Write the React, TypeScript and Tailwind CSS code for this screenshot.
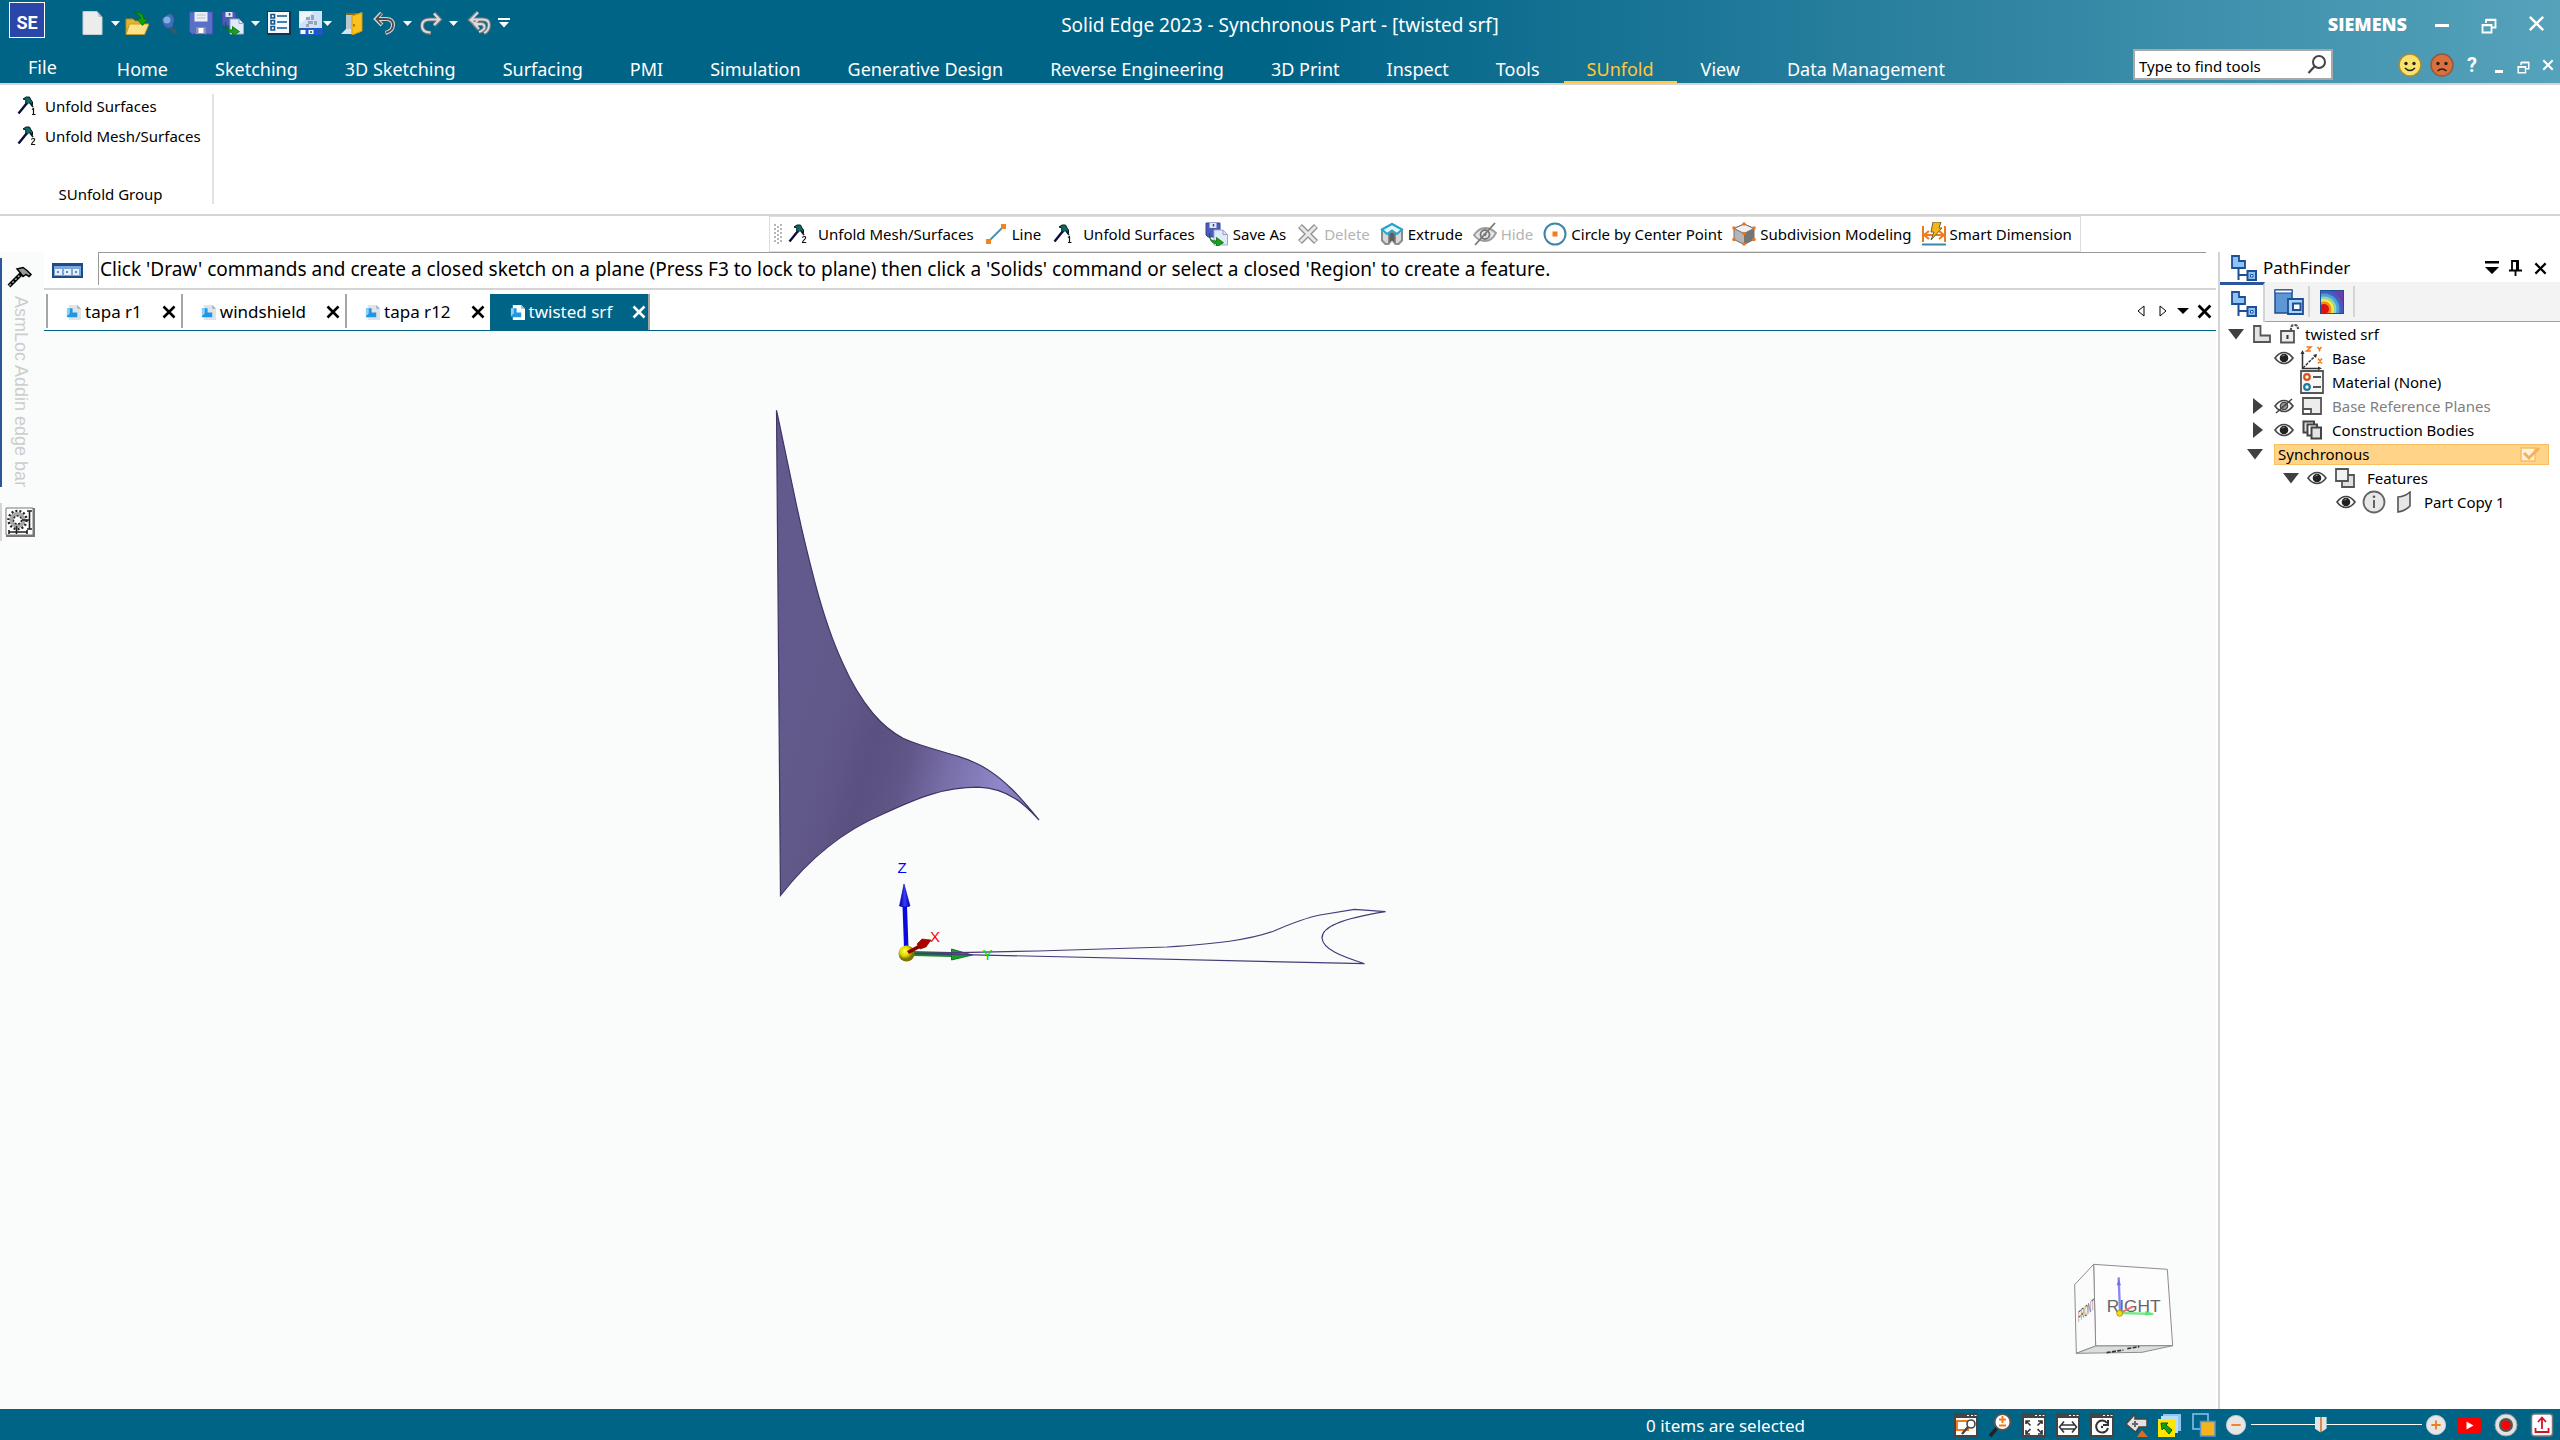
import type { ReactNode } from "react"

const menuTabs = [
  "Home",
  "Sketching",
  "3D Sketching",
  "Surfacing",
  "PMI",
  "Simulation",
  "Generative Design",
  "Reverse Engineering",
  "3D Print",
  "Inspect",
  "Tools",
  "SUnfold",
  "View",
  "Data Management",
]

const documents = [
  { name: "tapa r1", active: false },
  { name: "windshield", active: false },
  { name: "tapa r12", active: false },
  { name: "twisted srf", active: true },
]

type IconProps = { size?: number; box?: string; children: ReactNode }

function Icon({ size = 24, box = "0 0 24 24", children }: IconProps) {
  return (
    <svg width={size} height={size} viewBox={box} fill="none" className="shrink-0" aria-hidden="true">
      {children}
    </svg>
  )
}

/* ---------- shared icons ---------- */

function HammerIcon({ mark }: { mark: "1" | "2" }) {
  return (
    <Icon size={20} box="0 0 20 20">
      <path d="M1.500 17.500 10 7" stroke="#0b0b3c" strokeWidth="2.400" />
      <path d="M6 3 9 1h3.500l1.500 3 1.500 2v3l-2-1.500L12 6.500 10.500 8 8.500 6.500 9 4z" fill="#0c6b66" stroke="#0a1a1c" strokeWidth="1" />
      <path d="m13 7 3 4" stroke="#0a1a1c" strokeWidth="1.600" />
      {mark === "1" ? (
        <path d="M15 13.500 16.500 12.500v6M15 18.500h3.500" stroke="#111" strokeWidth="1.200" />
      ) : (
        <path d="M14.500 13.700q0-1.200 1.600-1.200t1.500 1.200q0 .8-1.500 2.200T14.500 18.500h3.700" stroke="#111" strokeWidth="1.100" />
      )}
    </Icon>
  )
}

function DiskPages() {
  return (
    <Icon>
      <path d="M1 1h14v14H3l-2-2z" fill="#4a5cb4" stroke="#3548a0" />
      <path d="M4.500 1h7v5h-7z" fill="#dfe6f6" />
      <path d="M8.500 2v2.500" stroke="#33418f" strokeWidth="1.500" />
      <path d="M9 8h9l4.500 4.500V23H9z" fill="#e3eaf7" stroke="#9aa9cf" />
      <path d="M18 8v4.500h4.500" stroke="#8fa0cc" />
      <path d="M4.500 11v3q0 5 7 5v-3.500l7 5.200-7 4v-3Q4 21.500 4.500 11z" fill="#17a317" stroke="#086b08" strokeWidth=".8" />
    </Icon>
  )
}

function CloseX({ size = 14, width = 2.6 }: { size?: number; width?: number }) {
  return (
    <Icon size={size} box="0 0 14 14">
      <path d="m1.500 1.500 11 11m0-11-11 11" stroke="currentColor" strokeWidth={width} />
    </Icon>
  )
}

function RestoreIcon({ size = 16 }: { size?: number }) {
  return (
    <Icon size={size} box="0 0 16 16">
      <path d="M5 5V2h9.500v7.500H11" stroke="#fff" strokeWidth="1.800" />
      <path d="M5 1.800h10M1 7.200h10" stroke="#fff" strokeWidth="2.200" />
      <path d="M1.500 7h9v7.500h-9z" stroke="#fff" strokeWidth="1.800" />
    </Icon>
  )
}

function EyeIcon({ crossed = false }: { crossed?: boolean }) {
  return (
    <Icon size={20} box="0 0 20 16">
      <path d="M1 8q4-5.500 9-5.500T19 8q-4 5.500-9 5.500T1 8z" fill="#fff" stroke="#444" strokeWidth="1.600" />
      {crossed ? (
        <>
          <circle cx="10" cy="8" r="3.600" fill="#999" stroke="#444" strokeWidth="1.400" />
          <path d="M2 15 18 1" stroke="#444" strokeWidth="1.600" />
        </>
      ) : (
        <>
          <circle cx="10" cy="8" r="4.300" fill="#222" />
          <path d="M8 6.500q.8-1.500 2.500-1.300" stroke="#999" />
        </>
      )}
    </Icon>
  )
}

/* ---------- title bar ---------- */

function DropArrow({ className = "w-5" }: { className?: string }) {
  return (
    <button aria-label="More" className={`flex h-6 items-center justify-center ${className}`}>
      <svg width="9" height="5" viewBox="0 0 9 5" aria-hidden="true">
        <path d="M0 0h9L4.500 5z" fill="#fff" />
      </svg>
    </button>
  )
}

function ToolButton({ label, className = "", children }: { label: string; className?: string; children: ReactNode }) {
  return (
    <button aria-label={label} className={`flex h-6 w-6 items-center justify-center ${className}`}>
      {children}
    </button>
  )
}

function QuickAccess() {
  return (
    <div className="flex items-center pt-[9px]">
      <ToolButton label="New">
        <Icon>
          <path d="M2 .5h14L21 6v17.500H2z" fill="#ececec" stroke="#c9cdd0" />
          <path d="M16 .5 21 6h-3z" fill="#b8bcc2" />
        </Icon>
      </ToolButton>
      <DropArrow />
      <ToolButton label="Open">
        <Icon>
          <path d="M1 8h7l2 2h9v13H1z" fill="#e2b531" stroke="#b48a18" />
          <path d="M4.500 13H24l-4.500 10.500H1z" fill="#fbe38a" stroke="#c69a26" />
          <path d="M9 1q10 0 10 7h4l-5.500 6.500L12 8h3.500Q15.500 4 9 1z" fill="#10a010" stroke="#076807" strokeWidth=".8" />
        </Icon>
      </ToolButton>
      <ToolButton label="Pin" className="ml-2">
        <Icon>
          <path d="m13 14 7 6q2 2-1 2.500-4 0-7-5z" fill="#3b5866" />
          <path d="M5 11q-1.500-4 2-5l4-3q3-1 5 1l1.500 4-1 6q-1 3.500-5 3.500t-6.500-6.500z" fill="#3a70b4" stroke="#24508c" />
          <circle cx="10" cy="9" r="3.500" fill="#7fb0e2" />
        </Icon>
      </ToolButton>
      <ToolButton label="Save" className="ml-2">
        <Icon>
          <path d="M.5 1h23v22H3L.5 20.500z" fill="#5a70c8" stroke="#4054ae" />
          <path d="M5.500 1h13v9.500h-13z" fill="#e9edf6" />
          <path d="M8 4h8.500M8 7h8.500" stroke="#b9bfd0" />
          <path d="M7 16h10v7H7z" fill="#8d93a4" />
          <path d="M9.500 17h5v5h-5z" fill="#fff" />
        </Icon>
      </ToolButton>
      <ToolButton label="Save copy" className="ml-2">
        <DiskPages />
      </ToolButton>
      <DropArrow />
      <ToolButton label="Options list" className="ml-0.5">
        <Icon>
          <path d="M0 0h24v24H0z" fill="#0f3556" />
          <path d="M1 1h21v21H1z" fill="#f3f8fc" />
          <path d="M4 3.500h3.500V7H4zM4 9.500h3.500V13H4zM4 15.500h3.500V19H4z" stroke="#15568a" strokeWidth="1.600" />
          <path d="M10 5h10M10 11h10M10 17h10" stroke="#15568a" strokeWidth="1.600" />
        </Icon>
      </ToolButton>
      <ToolButton label="Capture" className="ml-2">
        <Icon>
          <path d="M0 0h23v17H0z" fill="#cfe2fa" />
          <path d="M1 1h13l-7 7-6 5z" fill="#eef5fd" />
          <path d="M7 6h4v3H7zM12 4h3v5h-3zM9 10h5v3H9zM15 10h3v4h-3zM7 13h3v3H7z" fill="#97a4b8" />
          <path d="M0 17h24v7H0z" fill="#1b58c8" />
          <path d="M1.500 19h5v4h-5zM9.500 19h5v4h-5z" fill="#fff" />
          <path d="M11 20h2v2h-2z" fill="#2a9b2a" />
        </Icon>
      </ToolButton>
      <DropArrow className="w-4 -ml-1.5 pl-1" />
      <ToolButton label="Exit" className="ml-2">
        <Icon>
          <path d="M5 3h8v18H5z" fill="#b9c7d0" />
          <path d="M0 23 5 18h9v5z" fill="#d9e2ea" />
          <path d="M5 2h14v20h-3V4H5z" fill="#8b6b12" />
          <path d="M11 5 21 1.500V20l-10 4z" fill="#fbc21c" stroke="#d39b0b" />
          <path d="M13 13v2.500" stroke="#8a6408" strokeWidth="1.500" />
        </Icon>
      </ToolButton>
      <ToolButton label="Undo" className="ml-2">
        <Icon>
          <path d="M8.500 2 3 8l6 6M3.500 8H13q7 0 7 6t-7.500 8" stroke="#d5d5d5" strokeWidth="4" />
          <path d="M8.500 2.500 3.500 8l5 5.500M4 8h9q7 0 7 6t-7 7.500" stroke="#4b4b4b" strokeWidth="1.800" />
        </Icon>
      </ToolButton>
      <DropArrow />
      <ToolButton label="Redo" className="ml-0.5">
        <Icon>
          <path d="m15 2 6 6.500-6 6M20.500 8.500H11q-8 0-8 6.500t9 7" stroke="#6d7478" strokeWidth="4" />
          <path d="m15 2.500 5.500 6-5.500 5.500M20 8.500H11q-8 0-8 6.500t8.500 6.500" stroke="#dcdcdc" strokeWidth="2.200" />
        </Icon>
      </ToolButton>
      <DropArrow />
      <ToolButton label="Repeat" className="ml-1">
        <Icon>
          <path d="M11 1 3 9l8 7M4 8.500h12q6 0 6 5.500t-5 8.500M12 7.500 7 13l5 5.500M8 13h6q3.500 0 3.500 3T12 21" stroke="#7a7f83" strokeWidth="3.800" />
          <path d="M11 1.500 3.500 9l7.500 6.500M4 8.500h12q6 0 6 5.500t-5 8M12 8l-4.500 5 4.500 5M8 13h6q3.500 0 3.500 3T12 21" stroke="#dcdcdc" strokeWidth="1.800" />
        </Icon>
      </ToolButton>
      <button aria-label="Customize" className="ml-[7px] flex h-6 items-center">
        <svg width="12" height="10" viewBox="0 0 12 10" aria-hidden="true">
          <path d="M0 0h12v2H0zM1 4h10L6 9.500z" fill="#fff" />
        </svg>
      </button>
    </div>
  )
}

function TitleBar() {
  return (
    <div className="grid h-[47px] grid-cols-[1fr_auto_1fr] items-center">
      <div className="flex items-start gap-9 self-start pt-0.5 pl-[9px]">
        <div className="flex h-9 w-9 items-center justify-center border border-white bg-[#2a46a8] pt-1.5 font-['Roboto',sans-serif] text-lg leading-none font-bold text-white">
          SE
        </div>
        <QuickAccess />
      </div>
      <h1 className="pt-0.5 text-[19px] leading-6 text-white">Solid Edge 2023 - Synchronous Part - [twisted srf]</h1>
      <div className="flex items-center justify-end gap-[31px] pr-[15px]">
        <span className="font-['Open_Sans',sans-serif] text-[18px] leading-6 font-extrabold text-white">SIEMENS</span>
        <div className="flex items-center gap-[31px]">
          <button aria-label="Minimize" className="-ml-1 flex h-6 w-4 items-center justify-center">
            <span className="mt-1 h-[3px] w-[14px] bg-white" />
          </button>
          <button aria-label="Restore" className="pt-1">
            <RestoreIcon />
          </button>
          <button aria-label="Close" className="text-white">
            <CloseX size={17} width={2} />
          </button>
        </div>
      </div>
    </div>
  )
}

function FaceIcon({ fill, edge, mouth }: { fill: string; edge: string; mouth: string }) {
  return (
    <Icon>
      <circle cx="12" cy="12" r="11" fill={fill} stroke={edge} strokeWidth="1.500" />
      <circle cx="8" cy="10.500" r="1.700" fill="#222" />
      <circle cx="16" cy="10.500" r="1.700" fill="#222" />
      <path d={mouth} stroke="#222" strokeWidth="1.600" />
    </Icon>
  )
}

function MenuBar() {
  return (
    <div className="flex h-9 items-stretch justify-between text-[18px] text-white">
      <nav className="flex items-end">
        <button className="mr-[37px] h-8 pl-7 leading-6">File</button>
        {menuTabs.map((tab) => (
          <button
            key={tab}
            className={
              tab === "SUnfold"
                ? "mr-px h-8 border-b-2 border-[#ffc83d] px-[23px] pt-1.5 leading-6 text-[#ffc83d]"
                : "mr-px h-8 border-b-2 border-transparent px-[23px] pt-1.5 leading-6"
            }
          >
            {tab}
          </button>
        ))}
      </nav>
      <div className="flex items-start pt-0.5 pr-1.5">
        <label className="flex h-[31px] w-[200px] items-center border-2 border-[#a8a8a8] bg-white">
          <input
            type="text"
            aria-label="Find tools"
            placeholder="Type to find tools"
            className="w-[168px] bg-transparent pt-1 pl-1 text-[15px] text-black outline-none placeholder:text-black"
          />
          <Icon>
            <circle cx="16" cy="9" r="6" stroke="#444" strokeWidth="2" />
            <path d="m11.500 13.500-6 6.500" stroke="#444" strokeWidth="2.200" />
          </Icon>
        </label>
        <div className="flex items-center pt-1 pl-[65px]">
          <button aria-label="Happy">
            <FaceIcon fill="#fbe36a" edge="#a58a3c" mouth="M7 15q5 5 10 0" />
          </button>
          <button aria-label="Unhappy" className="ml-2">
            <FaceIcon fill="#dd6f3c" edge="#8f5b40" mouth="M7.500 18q4.500-4 9 0" />
          </button>
          <button aria-label="Help" className="ml-2.5 w-4 font-['Roboto',sans-serif] text-xl leading-6 font-bold">
            ?
          </button>
          <button aria-label="Minimize document" className="ml-[15px] flex h-6 w-2 items-end pb-1">
            <span className="h-[3px] w-2 bg-white" />
          </button>
          <button aria-label="Restore document" className="ml-3.5 pt-1">
            <RestoreIcon size={13} />
          </button>
          <button aria-label="Close document" className="ml-3">
            <CloseX size={12} width={2.4} />
          </button>
        </div>
      </div>
    </div>
  )
}

/* ---------- ribbon ---------- */

function Ribbon() {
  return (
    <div className="flex h-[131px] border-b-2 border-[#d4d4d4] bg-white pt-[9px]">
      <section className="flex h-[110px] w-[214px] flex-col border-r-2 border-[#e2e2e2] pl-[17px]">
        <button className="flex h-6 items-center gap-2 text-[15px] leading-5">
          <HammerIcon mark="1" />
          Unfold Surfaces
        </button>
        <button className="mt-1.5 flex h-6 items-center gap-2 text-[15px] leading-5 whitespace-nowrap">
          <HammerIcon mark="2" />
          Unfold Mesh/Surfaces
        </button>
        <h2 className="mt-auto pr-2 text-center text-[15px] leading-5">SUnfold Group</h2>
      </section>
    </div>
  )
}

function CommandButton({
  label,
  icon,
  disabled = false,
  wide = false,
}: {
  label: string
  icon: ReactNode
  disabled?: boolean
  wide?: boolean
}) {
  return (
    <button
      disabled={disabled}
      className={`flex items-center whitespace-nowrap disabled:text-[#b4b4b4] ${wide ? "gap-2" : "gap-1"}`}
    >
      <span className="flex w-6 justify-center">{icon}</span>
      {label}
    </button>
  )
}

function CommandBar() {
  return (
    <div className="flex h-9 bg-white">
      <div className="ml-[769px] flex items-center gap-2.5 border border-[#dedede] pr-2 text-[15px]">
        <svg width="10" height="20" className="-mr-2 ml-1" aria-hidden="true">
          {[0, 4, 8, 12, 16].map((y) => (
            <g key={y} fill="#b5b5b5">
              <rect x="0" y={y} width="2" height="2" />
              <rect x="6" y={y} width="2" height="2" />
              <rect x="3" y={y + 2} width="2" height="2" />
            </g>
          ))}
        </svg>
        <CommandButton wide label="Unfold Mesh/Surfaces" icon={<HammerIcon mark="2" />} />
        <CommandButton
          label="Line"
          icon={
            <Icon>
              <path d="m4 20 16-16" stroke="#4d91ae" strokeWidth="2" />
              <path d="M2 17h5v5H2zM17 2h5v5h-5z" fill="#f58220" />
            </Icon>
          }
        />
        <CommandButton wide label="Unfold Surfaces" icon={<HammerIcon mark="1" />} />
        <CommandButton label="Save As" icon={<DiskPages />} />
        <CommandButton
          disabled
          label="Delete"
          icon={
            <Icon>
              <path d="m4 4 16 16M20 4 4 20" stroke="#8e8e8e" strokeWidth="5.500" />
              <path d="m4.500 4.500 15 15m0-15-15 15" stroke="#e8e8e8" strokeWidth="3" />
            </Icon>
          }
        />
        <CommandButton
          label="Extrude"
          icon={
            <Icon>
              <path d="M1 7 12 1l11 6v12l-4 4h-4l-3-4-3 4H5l-4-4z" fill="#8b8d8f" />
              <path d="M9.500 12 12 10.500l2.500 1.500v9L12 18l-2.500 3z" fill="#5c5e60" />
              <path d="M3 9v9l3 3h2v-9zM21 9v9l-3 3h-2v-9z" fill="#d7d9da" />
              <path d="M2 7.500 12 2l10 5.500-5 4.500-5-3.500L7 12z" fill="#e6f6fb" stroke="#26a6cc" strokeWidth="2" />
            </Icon>
          }
        />
        <CommandButton
          disabled
          label="Hide"
          icon={
            <Icon>
              <path d="M1 13q5-7 11-7t11 5q-4 8-11 8T1 13z" fill="#e4e4e4" stroke="#9c9c9c" strokeWidth="1.800" />
              <circle cx="12" cy="12.500" r="4.500" stroke="#777" strokeWidth="1.800" />
              <circle cx="12" cy="12.500" r="1.500" fill="#777" />
              <path d="M2 23 22 1" stroke="#777" strokeWidth="1.800" />
            </Icon>
          }
        />
        <CommandButton
          label="Circle by Center Point"
          icon={
            <Icon>
              <circle cx="12" cy="12" r="10.500" fill="#fdfdfd" stroke="#3f86a4" strokeWidth="2" />
              <path d="M9.500 9.500h5v5h-5z" fill="#f07c1c" />
            </Icon>
          }
        />
        <CommandButton
          label="Subdivision Modeling"
          icon={
            <Icon>
              <path d="m12 2 10 4.500v11L12 22.500 2 17.500v-11z" fill="#b5b5b5" stroke="#6c6c6c" />
              <path d="m12 2 10 4.500L12 11.500 2 6.500z" fill="#f0f0f0" stroke="#6c6c6c" />
              <path d="m12 11.500 10-5v11l-10 5z" fill="#757575" />
              <g fill="#ee7623">
                <circle cx="12" cy="2" r="1.800" />
                <circle cx="22" cy="6" r="1.800" />
                <circle cx="2" cy="6" r="1.800" />
                <circle cx="12" cy="11.500" r="1.800" />
                <circle cx="2" cy="17.500" r="1.800" />
                <circle cx="22" cy="17.500" r="1.800" />
                <circle cx="12" cy="22" r="1.800" />
              </g>
            </Icon>
          }
        />
        <CommandButton
          label="Smart Dimension"
          icon={
            <Icon>
              <path d="M1 4v16M23 4v16" stroke="#ee7a1e" strokeWidth="2" />
              <path d="M2 13h20M7 9l-5 4 5 4M17 9l5 4-5 4" stroke="#ee7a1e" strokeWidth="2" />
              <path d="m11 0h8l-2 6h3L9 18l3-8H9z" fill="#f2b61c" stroke="#6f5f36" />
              <path d="M0 22.500h24" stroke="#3f86a4" strokeWidth="2" />
            </Icon>
          }
        />
      </div>
    </div>
  )
}

/* ---------- left strip ---------- */

function EdgeBar() {
  return (
    <aside className="w-11 shrink-0 bg-[#fafcfb] pt-1.5">
      <button className="flex w-full flex-col items-start border-l-2 border-[#2b579a] pl-1">
        <svg width="28" height="34" viewBox="0 0 28 34" fill="none" aria-hidden="true">
          <path d="M3 28 17 14" stroke="#000" strokeWidth="4" />
          <path d="m3.500 27.500 13-13" stroke="#aaa" strokeWidth="1.500" strokeDasharray="2 2" />
          <path d="M11 11 17 9.500l4 3 4 4-2 2-3-2-3 2-3-4z" fill="#999" stroke="#000" strokeWidth="1.500" />
        </svg>
        <span className="mt-1 pl-[3px] font-['Liberation_Sans',sans-serif] text-[18px] leading-6 text-[#cdcdcd] [writing-mode:vertical-rl]">
          AsmLoc Addin edge bar
        </span>
      </button>
      <button aria-label="Sensors" className="mt-4 flex border-l-2 border-[#d4d4d4] py-1 pl-[3px]">
        <svg width="30" height="30" viewBox="0 0 30 30" fill="none" aria-hidden="true">
          <path d="M1 1h27v27H1z" fill="#fff" stroke="#777" />
          <path d="M29 1v28H1" stroke="#777" strokeWidth="2" />
          <circle cx="12.500" cy="13" r="9" stroke="#222" strokeWidth="2.500" strokeDasharray="2 2" />
          <circle cx="12.500" cy="13" r="8" fill="#a8a8a8" />
          <circle cx="12.500" cy="13" r="4" fill="#fff" stroke="#222" strokeWidth="1.500" strokeDasharray="2 1.500" />
          <path d="M24.500 4v18M22 4h5M22 22h5M17 13h7M11.500 19v8M4 25h18M4 23v4M22 23v4" stroke="#222" strokeWidth="1.600" />
        </svg>
      </button>
    </aside>
  )
}

/* ---------- document area ---------- */

function DocumentTabs() {
  return (
    <div className="flex h-[41px] items-start border-b border-[#006487] bg-white pt-1 pl-0.5">
      {documents.map((doc) => (
        <div
          key={doc.name}
          className={
            doc.active
              ? "flex h-9 items-center border-r-2 border-[#a6a6a6] bg-[#006487] pr-0.5 pl-5 text-white"
              : "flex h-[34px] items-center border-l-2 border-[#a6a6a6] pt-0.5 pr-[5px] pl-[18px]"
          }
        >
          <button className="flex items-center gap-1 text-[17px] leading-6">
            <Icon size={15} box="0 0 16 16">
              <path d="M3 0h9l4 4v12H3z" fill={doc.active ? "#fff" : "#dfe4ea"} />
              <path d="M12 0v4h4z" fill="#9fb0c2" />
              <path d="M1 3.500h6V8h5v5H1z" fill="#2196e3" />
              <path d="M1 3.500h3V9l-3 3z" fill="#8fd0f7" />
            </Icon>
            {doc.name}
          </button>
          <button aria-label={`Close ${doc.name}`} className="ml-5">
            <CloseX />
          </button>
        </div>
      ))}
      <div className="ml-auto flex h-[34px] items-center pr-1">
        <button aria-label="Previous tab" className="mr-3.5">
          <svg width="8" height="12" viewBox="0 0 8 12" fill="none" aria-hidden="true">
            <path d="M7 1v10L1 6z" stroke="#000" />
          </svg>
        </button>
        <button aria-label="Next tab" className="mr-2.5">
          <svg width="8" height="12" viewBox="0 0 8 12" fill="none" aria-hidden="true">
            <path d="M1 1v10l6-5z" stroke="#000" />
          </svg>
        </button>
        <button aria-label="Tab list" className="mr-2">
          <svg width="12" height="6" viewBox="0 0 12 6" aria-hidden="true">
            <path d="M0 0h12L6 6z" />
          </svg>
        </button>
        <button aria-label="Close tab">
          <CloseX size={15} />
        </button>
      </div>
    </div>
  )
}

function Scene() {
  return (
    <svg className="absolute inset-0 h-full w-full" fill="none" aria-label="Model view">
      <defs>
        <linearGradient id="surface" gradientUnits="userSpaceOnUse" x1="777" y1="730" x2="1035" y2="800">
          <stop offset="0" stopColor="#62598c" />
          <stop offset=".18" stopColor="#62598b" />
          <stop offset=".36" stopColor="#5b5180" />
          <stop offset=".5" stopColor="#605687" />
          <stop offset=".64" stopColor="#766ca5" />
          <stop offset=".85" stopColor="#8d87c8" />
          <stop offset="1" stopColor="#7d76b5" />
        </linearGradient>
        <linearGradient id="blueArrow">
          <stop offset="0" stopColor="#0000a8" />
          <stop offset=".5" stopColor="#3a3aff" />
          <stop offset="1" stopColor="#0000a8" />
        </linearGradient>
        <radialGradient id="origin" cx=".4" cy=".35">
          <stop offset="0" stopColor="#ffff50" />
          <stop offset=".6" stopColor="#e0d800" />
          <stop offset="1" stopColor="#7c7600" />
        </radialGradient>
      </defs>
      <g transform="translate(-44 -331)">
        <path
          d="M776.500 410.300C783 440 789 470 795 498C801 527 808 556 815 582.700C823 613 832 640 843 663.800C851 682 861 699 873 713.500C882 724 891 732 903 738.200C920 746 938 750 956.700 755.800C968 759 976 763 981.700 766C1005 779 1022 799 1039 820C1026 806 1010 788.500 978 787.200C945 787.500 922 795.700 883 814C850 828 815 851 780.500 895.500Z"
          fill="url(#surface)"
          stroke="#3f3466"
          strokeWidth="1.200"
        />
        <path d="m914 951 37 1v5l-37-1z" fill="#178a2c" />
        <path d="m951.500 949 21 6-21 5z" fill="#11a321" stroke="#075c12" strokeWidth=".8" />
        <path
          d="M908 953.300L971 952.300L1038 951L1167 947C1215 944 1250 940 1274 931C1290 924 1305 918 1320 915L1354.500 909.300L1385.500 911.700C1340 919 1322 927 1322 938C1323 949 1340 956 1364.500 963.700L908 953.300"
          stroke="#47397a"
          strokeWidth="1.200"
        />
        <path d="m904 948-1.500-42h4.500l1.500 42z" fill="#0a0ae0" />
        <path d="m904 884 6 22q-5 2-10.500 0z" fill="url(#blueArrow)" stroke="#0000a0" strokeWidth=".6" />
        <circle cx="906.500" cy="953.500" r="8" fill="url(#origin)" />
        <path d="m907 951 13-7 2 3-13 7z" fill="#8f0000" />
        <path d="m917 944 5-5 9 1-5 7-6 2z" fill="#b00000" stroke="#700000" strokeWidth=".6" />
        <g className="font-['Liberation_Sans',sans-serif]" fontSize="15">
          <text x="897.500" y="873" fill="#0000ff">Z</text>
          <text x="930" y="942" fill="#ff0000">X</text>
          <text x="982.500" y="960" fill="#00d800">Y</text>
        </g>
      </g>
    </svg>
  )
}

function ViewCube() {
  return (
    <svg
      className="absolute right-4 bottom-[29px]"
      width="150"
      height="140"
      viewBox="0 0 450 420"
      fill="none"
      aria-label="View orientation"
    >
      <path d="M131 73 352 88 368 317 137 318z" fill="#fdfdfd" stroke="#8c8c8c" strokeWidth="3" />
      <path d="M131 73 74 134l5 206 58-22z" fill="#fbfbfb" stroke="#8c8c8c" strokeWidth="3" />
      <path d="m79 340 58-22 231-1-92 20z" fill="#dcdedd" stroke="#8c8c8c" strokeWidth="3" />
      <path d="m170 338 50-8m12-4 36-6" stroke="#333" strokeWidth="5" strokeDasharray="12 4" />
      <g className="font-['Liberation_Sans',sans-serif]" fill="#666">
        <text x="170" y="216" fontSize="52">RIGHT</text>
        <text fontSize="28" transform="matrix(.5 -.42 0 1.700 84 248)" fill="#555">FRONT</text>
      </g>
      <path d="M210 215 206 112" stroke="#8a86f5" strokeWidth="7" />
      <path d="m206 118 7 18h-13z" fill="#7570f0" />
      <path d="m214 219 96 3" stroke="#7be98c" strokeWidth="7" />
      <path d="m286 213 24 8-24 6z" fill="#5fe373" />
      <path d="m214 217 36-18" stroke="#f56d6d" strokeWidth="6" />
      <circle cx="209" cy="220" r="9" fill="#f5dc00" stroke="#8f8100" strokeWidth="2" />
    </svg>
  )
}

function DocumentArea() {
  return (
    <main className="flex min-w-0 flex-1 flex-col">
      <div className="flex h-[38px] items-start border-b-2 border-[#d4d4d4] bg-white">
        <svg width="31" height="15" viewBox="0 0 31 15" className="mt-[11px] ml-2 shrink-0" aria-hidden="true">
          <path d="M0 0h31v15H0z" fill="#1f4a86" />
          <path d="M2 3h27v10H2z" fill="#7ba7dc" />
          <path d="M3 6h7v6H3zM12 6h7v6h-7zM21 6h6v6h-6z" fill="#e6effa" />
          <path d="M5 8h2v2H5zM14 8h2v2h-2zM23 8h2v2h-2z" fill="#5b8ac4" />
        </svg>
        <p className="mr-2.5 ml-[15px] h-[33px] flex-1 border-t border-l border-[#999] pl-px text-[19px] leading-8 whitespace-nowrap">
          Click 'Draw' commands and create a closed sketch on a plane (Press F3 to lock to plane) then click a 'Solids'
          command or select a closed 'Region' to create a feature.
        </p>
      </div>
      <DocumentTabs />
      <div className="relative flex-1 bg-[#fafcfb]">
        <Scene />
        <ViewCube />
      </div>
    </main>
  )
}

/* ---------- PathFinder ---------- */

function TreeGlyph() {
  return (
    <Icon size={26} box="0 0 26 26">
      <path d="M1 1h7v5h6v7H1z" fill="#8cc4f5" stroke="#1f4f94" strokeWidth="1.800" />
      <path d="M7.500 13v12M7.500 20H16" stroke="#1f4f94" strokeWidth="2" />
      <path d="M16.500 16h8.500v9h-8.500z" fill="#8cc4f5" stroke="#1f4f94" strokeWidth="2" />
      <path d="M19.500 19.500h2.500V22h-2.500z" fill="#fff" stroke="#1f4f94" />
    </Icon>
  )
}

function Twisty({ open }: { open: boolean }) {
  return (
    <button aria-label={open ? "Collapse" : "Expand"} className="flex w-6 justify-center">
      <svg width="16" height="16" viewBox="0 0 16 16" aria-hidden="true">
        <path d={open ? "M0 3h16L8 13.500z" : "M3 0v16l10-8z"} fill="#404040" />
      </svg>
    </button>
  )
}

function Slot({ children }: { children?: ReactNode }) {
  return <span className="flex w-7 shrink-0 justify-center">{children}</span>
}

function TreeRow({ className, children }: { className: string; children: ReactNode }) {
  return <li className={`flex h-6 items-center ${className}`}>{children}</li>
}

function PathFinder() {
  return (
    <aside className="ml-0.5 flex w-[342px] shrink-0 flex-col border-l-2 border-[#d4d4d4] bg-white">
      <div className="flex h-[30px] items-center pt-0.5 pl-[11px]">
        <TreeGlyph />
        <h2 className="ml-1.5 text-[17px] leading-6">PathFinder</h2>
        <div className="ml-auto flex items-center gap-2.5 pr-[13px]">
          <button aria-label="Panel menu">
            <svg width="14" height="14" viewBox="0 0 14 14" aria-hidden="true">
              <path d="M0 0h14v2.500H0zM0 6h14l-7 7z" />
            </svg>
          </button>
          <button aria-label="Auto hide">
            <svg width="13" height="16" viewBox="0 0 13 16" fill="none" aria-hidden="true">
              <path d="M3 10V1h6v9M0 10.500h13M6.500 11v5" stroke="#000" strokeWidth="1.800" />
              <path d="M8.500 1v9" stroke="#000" strokeWidth="3" />
            </svg>
          </button>
          <button aria-label="Close panel" className="ml-0.5">
            <CloseX size={13} width={2.4} />
          </button>
        </div>
      </div>
      <div className="flex h-10 border-b border-[#a0a0a0] bg-[#f3f3f3]">
        <button aria-label="PathFinder tab" className="h-10 w-[45px] border-t-3 border-r-2 border-t-[#2b579a] border-r-[#d4d4d4] bg-white pl-[11px]">
          <TreeGlyph />
        </button>
        <button aria-label="Feature library" className="my-1 flex w-[45px] items-center justify-center border-r-2 border-[#d4d4d4] pl-1">
          <svg width="30" height="26" viewBox="0 0 30 26" fill="none" aria-hidden="true">
            <path d="M1 1h17v23H1z" fill="#5d97d6" stroke="#1f4f94" strokeWidth="1.500" />
            <path d="M1 1h17v3H1z" fill="#fff" stroke="#1f4f94" />
            <path d="M14 10h15v15H14z" fill="#a5d2f8" stroke="#1f4f94" strokeWidth="1.800" />
            <path d="M19 14.500h7.500v6.500H19z" fill="#fff" stroke="#1f4f94" strokeWidth="2" />
          </svg>
        </button>
        <button aria-label="Simulation results" className="my-1 flex w-[45px] items-center justify-center border-r-2 border-[#d4d4d4]">
          <svg width="24" height="24" viewBox="0 0 24 24" aria-hidden="true">
            <defs>
              <clipPath id="plot">
                <path d="M0 0h24v24H0z" />
              </clipPath>
            </defs>
            <g clipPath="url(#plot)">
              <path d="M0 0h24v24H0z" fill="#6b3fa8" />
              <circle cx="4" cy="19" r="19" fill="#3f5fc4" />
              <circle cx="4" cy="19" r="15.500" fill="#4f9fd8" />
              <circle cx="4" cy="19" r="12.500" fill="#8fd6b0" />
              <circle cx="4" cy="19" r="10" fill="#f6ea3a" />
              <circle cx="4" cy="19" r="7.500" fill="#f58a1c" />
              <circle cx="4" cy="19" r="5" fill="#e01010" />
              <path d="M0 0h24v24H0z" fill="none" stroke="#1f4f94" strokeWidth="2" />
            </g>
          </svg>
        </button>
      </div>
      <ul className="flex flex-col text-[15px] leading-6 whitespace-nowrap">
        <TreeRow className="pl-1">
          <Twisty open />
          <Slot>
            <Icon size={18} box="0 0 18 18">
              <path d="M1 1h6.500v9.500H17V17H1z" fill="#e3e3e3" stroke="#555" strokeWidth="1.800" />
            </Icon>
          </Slot>
          <Slot>
            <Icon size={20} box="0 0 20 20">
              <path d="M1 7h13v11.500H1z" fill="#ededed" stroke="#555" strokeWidth="1.800" />
              <path d="M11 7V4.500Q11 1 14.500 1T18 5" stroke="#555" strokeWidth="2.200" strokeDasharray="3 1" />
              <path d="M7.500 11v4" stroke="#333" strokeWidth="2" />
            </Icon>
          </Slot>
          <span className="pl-px">twisted srf</span>
        </TreeRow>
        <TreeRow className="pl-[50px]">
          <Slot>
            <EyeIcon />
          </Slot>
          <Slot>
            <Icon>
              <path d="M2.500 6v16.500H20" stroke="#333" strokeWidth="1.500" />
              <path d="m.5 8 2-4 2 4zM18 20.500l4 2-4 1.500z" fill="#333" />
              <path d="m3 22 13-13" stroke="#333" strokeWidth="1.400" strokeDasharray="3 1" />
              <path d="m17 8-4 1 3 3z" fill="#333" />
              <path d="M6.500 1h4.500L6.500 5H11M17.500 1l2 2.500L21.500 1M19.500 3.500v2M18 12.500l4 5m0-5-4 5" stroke="#ee7a1e" strokeWidth="1.500" />
            </Icon>
          </Slot>
          <span className="pl-1.5">Base</span>
        </TreeRow>
        <TreeRow className="pl-[78px]">
          <Slot>
            <Icon>
              <path d="M1 1h22v22H1z" fill="#f7f7f7" stroke="#555" strokeWidth="1.800" />
              <circle cx="7" cy="7" r="2.800" stroke="#d8531b" strokeWidth="2.200" />
              <circle cx="7" cy="17" r="2.800" stroke="#1c7ba0" strokeWidth="2.200" />
              <path d="M13 7h8M13 17h8" stroke="#555" strokeWidth="1.800" />
            </Icon>
          </Slot>
          <span className="pl-1.5">Material (None)</span>
        </TreeRow>
        <TreeRow className="pl-[26px]">
          <Twisty open={false} />
          <Slot>
            <EyeIcon crossed />
          </Slot>
          <Slot>
            <Icon size={20} box="0 0 20 18">
              <path d="M1 1h18v16H1z" fill="#ececec" stroke="#555" strokeWidth="1.800" />
              <path d="M1 12h8v5H1z" fill="#fff" stroke="#555" strokeWidth="1.800" />
            </Icon>
          </Slot>
          <span className="pl-1.5 text-[#808080]">Base Reference Planes</span>
        </TreeRow>
        <TreeRow className="pl-[26px]">
          <Twisty open={false} />
          <Slot>
            <EyeIcon />
          </Slot>
          <Slot>
            <Icon size={20} box="0 0 20 20">
              <path d="M1.500 1.500H12v11H1.500z" fill="#ddd" stroke="#444" strokeWidth="2" />
              <path d="M5.500 4.500H15v11H5.500z" fill="#fff" stroke="#444" strokeWidth="2" />
              <path d="M9.500 7.500H19v11H9.500z" fill="#e3e3e3" stroke="#444" strokeWidth="2" />
            </Icon>
          </Slot>
          <span className="pl-1.5">Construction Bodies</span>
        </TreeRow>
        <TreeRow className="pr-[11px] pl-[23px]">
          <Twisty open />
          <div className="ml-[7px] flex h-[21px] flex-1 items-center justify-between border border-[#f7be62] bg-[#ffd488] pr-2 pl-[3px]">
            <span>Synchronous</span>
            <Icon size={20} box="0 0 20 16">
              <path d="M1 2h14v13H1z" fill="#fff3dd" stroke="#f7be62" strokeWidth="1.500" />
              <path d="m4 7 5 5 10-10" stroke="#f5ae5a" strokeWidth="3" />
            </Icon>
          </div>
        </TreeRow>
        <TreeRow className="pl-[59px]">
          <Twisty open />
          <Slot>
            <EyeIcon />
          </Slot>
          <Slot>
            <Icon size={20} box="0 0 20 20">
              <path d="M9 7h10v12H7v-6z" fill="#e0e0e0" stroke="#555" strokeWidth="1.800" />
              <path d="M1 1h12v12H1z" fill="#f2f2f2" stroke="#555" strokeWidth="1.800" />
            </Icon>
          </Slot>
          <span className="pl-2">Features</span>
        </TreeRow>
        <TreeRow className="pl-[112px]">
          <Slot>
            <EyeIcon />
          </Slot>
          <Slot>
            <Icon>
              <circle cx="12" cy="12" r="10.500" fill="#e8e8e8" stroke="#666" strokeWidth="1.800" />
              <circle cx="12" cy="6.800" r="1.300" fill="#555" />
              <path d="M12 10v8" stroke="#555" strokeWidth="1.800" />
            </Icon>
          </Slot>
          <Slot>
            <Icon size={22} box="0 0 22 22">
              <path d="M7 6q7-.5 12-5v14q-5 5-12 6z" fill="#e6e6e6" stroke="#555" strokeWidth="1.600" />
            </Icon>
          </Slot>
          <span className="pl-2">Part Copy 1</span>
        </TreeRow>
      </ul>
    </aside>
  )
}

/* ---------- status bar ---------- */

function WindowFrame({ children }: { children: ReactNode }) {
  return (
    <Icon>
      <path d="M1 1h22v22H1z" fill="#fff" stroke="#444" strokeWidth="2" />
      <path d="M1 1h22v4H1z" fill="#444" />
      <path d="M13 2.500h2M17 2.500h2M20.500 2.500h2" stroke="#fff" />
      {children}
    </Icon>
  )
}

function StatusButton({ label, className = "w-[34px]", children }: { label: string; className?: string; children: ReactNode }) {
  return (
    <button aria-label={label} className={`flex h-6 items-center justify-center ${className}`}>
      {children}
    </button>
  )
}

function ZoomKnob({ plus = false }: { plus?: boolean }) {
  return (
    <Icon size={22}>
      <circle cx="12" cy="12" r="10.500" fill="#e6e6e6" stroke="#c4c8cc" />
      <path d={plus ? "M7 12h10M12 7v10" : "M7 12h10"} stroke="#f07c1c" strokeWidth="2" />
    </Icon>
  )
}

function StatusBar() {
  return (
    <footer className="flex h-[31px] items-center justify-end bg-[#006487] text-white">
      <span className="mr-36 pt-0.5 text-[17px] leading-6">0 items are selected</span>
      <StatusButton label="Zoom area">
        <WindowFrame>
          <path d="M3 8h11v9H3z" stroke="#f07c1c" strokeWidth="2" />
          <circle cx="17" cy="11" r="4" fill="#fff" stroke="#444" strokeWidth="1.600" />
          <path d="m14 14-6 7" stroke="#444" strokeWidth="2.400" />
        </WindowFrame>
      </StatusButton>
      <StatusButton label="Zoom">
        <Icon>
          <path d="m9 15-7 8" stroke="#222" strokeWidth="3.600" />
          <circle cx="14.500" cy="9" r="8" fill="#fff" stroke="#555" strokeWidth="2" />
          <path d="M14.500 3v7M11 6.500h7M11 12.500h7" stroke="#f07c1c" strokeWidth="2" />
        </Icon>
      </StatusButton>
      <StatusButton label="Fit">
        <WindowFrame>
          <path d="M4 11V8h4M16 8h4v3M4 17v4h4M16 21h4v-4M4.500 8.500l4 4M19.500 8.500l-4 4M4.500 20l4-4M19.500 20l-4-4" stroke="#333" strokeWidth="1.600" />
        </WindowFrame>
      </StatusButton>
      <StatusButton label="Pan">
        <WindowFrame>
          <path d="M8 8.500 3.500 14 8 19.500M16 8.500l4.500 5.500-4.500 5.500M5 12h14M5 16h14" stroke="#333" strokeWidth="1.600" />
        </WindowFrame>
      </StatusButton>
      <StatusButton label="Rotate">
        <WindowFrame>
          <path d="M17 10a6 6 0 1 0 1 5M18 7v5h-5" stroke="#333" strokeWidth="2" />
          <circle cx="12" cy="14" r="1.200" fill="#333" />
        </WindowFrame>
      </StatusButton>
      <StatusButton label="Previous view">
        <Icon>
          <path d="M2 11 11 1v5h12v8H15l-3 5-3-2z" fill="#e2e2e2" stroke="#444" strokeWidth="1.500" />
          <path d="M8 11h6M11 8v6" stroke="#666" strokeWidth="2" />
          <path d="m18 17 6 7H13z" fill="#e06c1a" />
        </Icon>
      </StatusButton>
      <StatusButton label="View orientation">
        <Icon>
          <path d="M5 1h18v17H5z" fill="#8fc6f2" />
          <path d="M3 3h17v17H3z" fill="#b9ddf8" />
          <path d="M0 6h17v18H0z" fill="#ffe500" />
          <path d="M3 10h7l-2 2 6 5-3 4-5-6-2 2z" fill="#12a012" stroke="#055f05" />
        </Icon>
      </StatusButton>
      <StatusButton label="View styles">
        <Icon>
          <path d="M1 1h15v15H1z" stroke="#8cc4f5" strokeWidth="1.500" />
          <path d="M8.500 8.500H23V23H8.500z" fill="#f5b41c" stroke="#5b94d0" strokeWidth="1.500" />
        </Icon>
      </StatusButton>
      <StatusButton label="Zoom out" className="w-[30px]">
        <ZoomKnob />
      </StatusButton>
      <input
        type="range"
        aria-label="Zoom level"
        defaultValue={40}
        className="h-4 w-[171px] appearance-none bg-[linear-gradient(#fff,#fff)] bg-[length:100%_1px] bg-center bg-no-repeat [&::-webkit-slider-thumb]:h-4 [&::-webkit-slider-thumb]:w-3 [&::-webkit-slider-thumb]:appearance-none [&::-webkit-slider-thumb]:bg-[linear-gradient(90deg,#e4e4e4_5px,#d9894a_5px,#d9894a_7px,#e4e4e4_7px)] [&::-webkit-slider-thumb]:[clip-path:polygon(0_0,100%_0,100%_75%,50%_100%,0_75%)]"
      />
      <StatusButton label="Zoom in" className="w-7">
        <ZoomKnob plus />
      </StatusButton>
      <StatusButton label="YouTube" className="w-[37px]">
        <Icon>
          <path d="M2 4h20l2 2v13l-2 2H2l-2-2V6z" fill="#f00" />
          <path d="m9.500 8.500 7 4-7 4z" fill="#fff" />
        </Icon>
      </StatusButton>
      <StatusButton label="Record" className="w-[37px]">
        <Icon>
          <circle cx="12" cy="12" r="11" fill="#e2e2e2" stroke="#9c9c9c" />
          <circle cx="12" cy="12" r="7" fill="#555" />
          <circle cx="12" cy="12" r="4.500" fill="#f00" />
        </Icon>
      </StatusButton>
      <StatusButton label="Upload" className="w-9">
        <Icon>
          <rect x="1.500" y="1" width="21" height="22" rx="3" fill="#fff" stroke="#777" strokeWidth="1.500" />
          <path d="M12 16V5M8 9l4-4.500L16 9M5.500 15v4h13v-4" stroke="#d80f2a" strokeWidth="1.800" />
        </Icon>
      </StatusButton>
    </footer>
  )
}

export default function App() {
  return (
    <div className="flex min-h-screen flex-col bg-white font-['Noto_Sans',sans-serif] text-black">
      <header>
        <div className="border-b-2 border-[#d4d4d4] bg-[linear-gradient(90deg,#006487_0%,#006487_50%,#2d82a0_76%,#55a2bb_100%)]">
          <TitleBar />
          <MenuBar />
        </div>
        <Ribbon />
        <CommandBar />
      </header>
      <div className="flex flex-1">
        <EdgeBar />
        <DocumentArea />
        <PathFinder />
      </div>
      <StatusBar />
    </div>
  )
}
